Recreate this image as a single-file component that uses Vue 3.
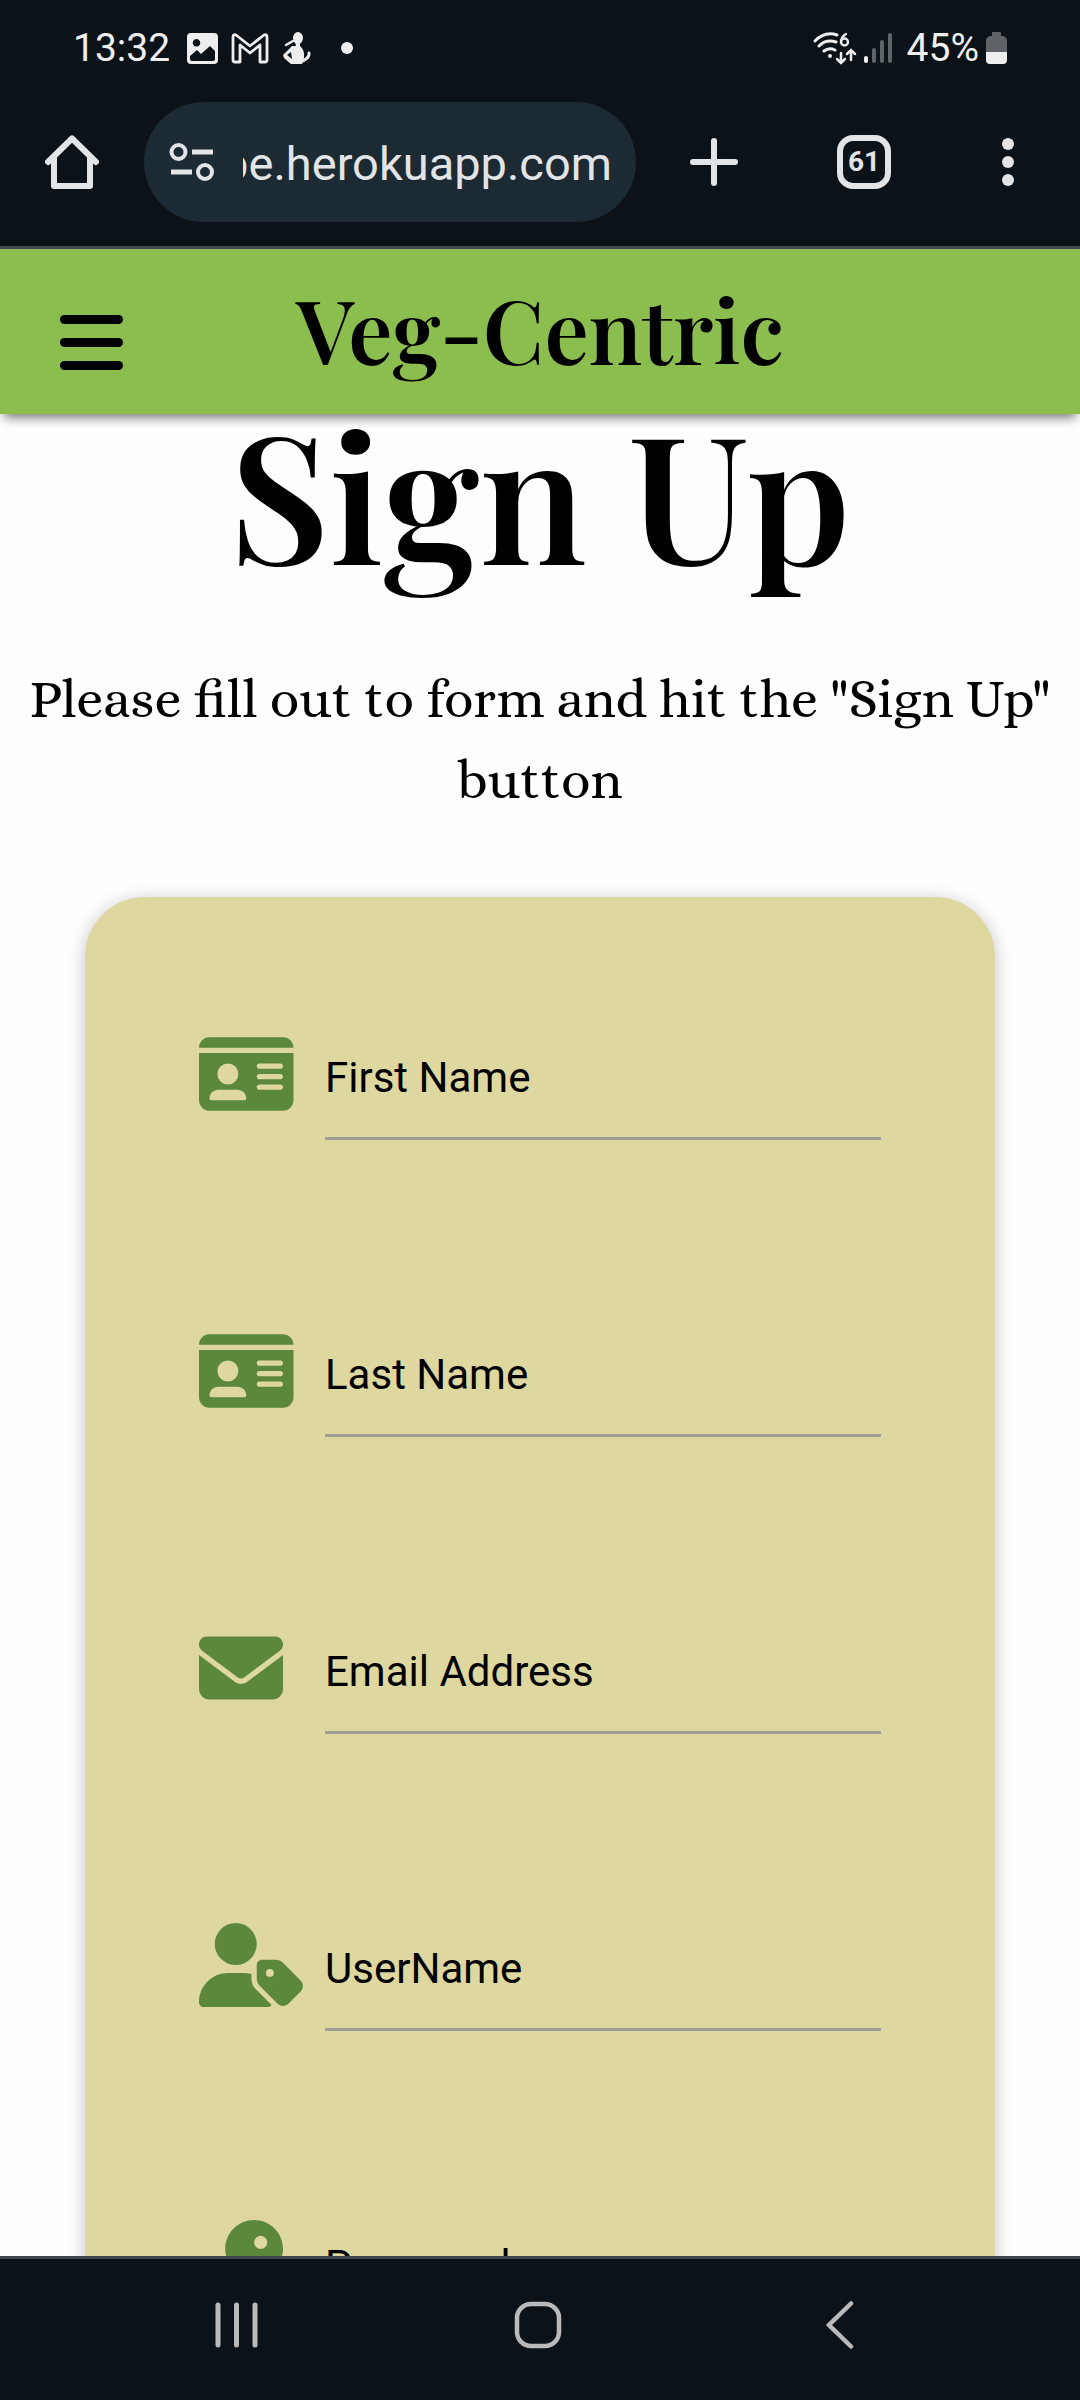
<script setup>
import { reactive } from 'vue'

const icons = {
  card: {
    width: 576,
    path: 'M0 96l576 0c0-35.3-28.7-64-64-64H64C28.7 32 0 60.7 0 96zm0 32V416c0 35.3 28.7 64 64 64H512c35.3 0 64-28.7 64-64V128H0zM64 405.3c0-29.5 23.9-53.3 53.3-53.3H234.7c29.5 0 53.3 23.9 53.3 53.3c0 5.9-4.8 10.7-10.7 10.7H74.7c-5.9 0-10.7-4.8-10.7-10.7zM176 192a64 64 0 1 1 0 128 64 64 0 1 1 0-128zm176 16c0-8.8 7.2-16 16-16H496c8.8 0 16 7.2 16 16s-7.2 16-16 16H368c-8.8 0-16-7.2-16-16zm0 64c0-8.8 7.2-16 16-16H496c8.8 0 16 7.2 16 16s-7.2 16-16 16H368c-8.8 0-16-7.2-16-16zm0 64c0-8.8 7.2-16 16-16H496c8.8 0 16 7.2 16 16s-7.2 16-16 16H368c-8.8 0-16-7.2-16-16z',
  },
  envelope: {
    width: 512,
    path: 'M48 64C21.5 64 0 85.5 0 112c0 15.1 7.1 29.3 19.2 38.4L236.8 313.6c11.4 8.5 27 8.5 38.4 0L492.8 150.4c12.1-9.1 19.2-23.3 19.2-38.4c0-26.5-21.5-48-48-48H48zM0 176V384c0 35.3 28.7 64 64 64H448c35.3 0 64-28.7 64-64V176L294.4 339.2c-22.8 17.1-54 17.1-76.8 0L0 176z',
  },
  userTag: {
    width: 640,
    path: 'M224 256A128 128 0 1 0 224 0a128 128 0 1 0 0 256zm-45.7 48C79.8 304 0 383.8 0 482.3C0 498.7 13.3 512 29.7 512H418.3c10 0 18.8-4.9 24.2-12.5l-99.2-99.2c-14.9-14.9-23.3-35.1-23.3-56.1v-33c-15.9-4.7-32.8-7.2-50.3-7.2H178.3zM384 224c-17.7 0-32 14.3-32 32v82.7c0 17 6.7 33.3 18.7 45.3L478.1 491.3c18.7 18.7 49.1 18.7 67.9 0l73.4-73.4c18.7-18.7 18.7-49.1 0-67.9L512 242.7c-12-12-28.3-18.7-45.3-18.7H384zm24 80a24 24 0 1 1 48 0 24 24 0 1 1 -48 0z',
  },
  key: {
    width: 512,
    path: 'M336 352c97.2 0 176-78.8 176-176S433.2 0 336 0S160 78.8 160 176c0 18.7 2.9 36.8 8.3 53.7L7 391c-4.5 4.5-7 10.6-7 17v80c0 13.3 10.7 24 24 24h80c13.3 0 24-10.7 24-24V448h40c13.3 0 24-10.7 24-24V384h40c6.4 0 12.5-2.5 17-7l33.3-33.3c16.9 5.4 35 8.3 53.7 8.3zM376 96a40 40 0 1 1 0 80 40 40 0 1 1 0-80z',
  },
}

const fields = [
  { id: 'first-name', label: 'First Name', type: 'text', icon: icons.card },
  { id: 'last-name', label: 'Last Name', type: 'text', icon: icons.card },
  { id: 'email', label: 'Email Address', type: 'email', icon: icons.envelope },
  { id: 'username', label: 'UserName', type: 'text', icon: icons.userTag },
  { id: 'password', label: 'Password', type: 'password', icon: icons.key },
]

const values = reactive({ 'first-name': '', 'last-name': '', email: '', username: '', password: '' })
</script>

<template>
  <div class="screen">
    <div class="browser">
      <div class="status">
        <div class="status-left">
          <span class="clock">13:32</span>
          <svg width="31" height="31" viewBox="0 0 31 31">
            <path fill="#eee" fill-rule="evenodd" d="M4 0H27Q31 0 31 4V27Q31 31 27 31H4Q0 31 0 27V4Q0 0 4 0ZM9.500 6a3.800 3.800 0 1 0 .01 0ZM3 23V26Q3 28 5 28H26Q28 28 28 26V18L23 13L14 21L10 17Z" />
          </svg>
          <svg width="38" height="31" viewBox="0 0 38 31" fill="none" stroke="#eee" stroke-width="2.800" stroke-linejoin="round">
            <path d="M2 27V4Q2 1 5 2L19 13L33 2Q36 1 36 4V27Q36 29 34 29H29V12L19 20L9 12V29H4Q2 29 2 27Z" />
          </svg>
          <svg width="30" height="33" viewBox="0 0 30 33">
            <g fill="#eee">
              <ellipse cx="16" cy="6" rx="5" ry="6" />
              <path d="M13 10H18V14Q23 18 22 26L20 32H9L2 26L1 23L10 14H14Z" />
            </g>
            <path d="M4 13L11 9" stroke="#eee" stroke-width="2.500" stroke-linecap="round" />
            <path d="M5 23L9 20L10 27Z" fill="#0c1318" />
            <path d="M27 21Q28 25 21 29" fill="none" stroke="#eee" stroke-width="3" stroke-linecap="round" />
          </svg>
          <span class="more-dot"></span>
        </div>
        <div class="status-right">
          <svg width="44" height="33" viewBox="0 0 44 33" fill="none" stroke="#eee" stroke-width="3" stroke-linecap="round">
            <path d="M2 9Q12-1 24 3M6 14Q13 7 23 10M11 19Q16 15 22 18" />
            <circle cx="17" cy="24" r="2" fill="#eee" stroke="none" />
            <path d="M33 2Q28 5 28 10" stroke-width="2.400" />
            <circle cx="31.500" cy="10" r="3.500" stroke-width="2.400" />
            <path d="M28 21V31M24 27L28 31L32 27M38 28V18M34 22L38 18L42 22" stroke-width="2.500" />
          </svg>
          <svg width="28" height="31" viewBox="0 0 28 31" stroke-width="4" stroke-linecap="round">
            <path d="M2 25V28" stroke="#eee" />
            <path d="M10 17V28M18 9V28M26 2V28" stroke="#5f6467" />
          </svg>
          <span class="percent">45%</span>
          <svg width="21" height="32" viewBox="0 0 21 32">
            <path d="M6 1Q6 0 7 0H14Q15 0 15 1V4H17Q21 5 21 9V20H0V9Q0 5 4 4H6Z" fill="#5f6367" />
            <path d="M0 20H21V28Q21 32 17 32H4Q0 32 0 28Z" fill="#eee" />
          </svg>
        </div>
      </div>

      <div class="toolbar">
        <button type="button" class="tool home" aria-label="Home">
          <svg width="54" height="54" viewBox="0 0 54 54" fill="none" stroke="#e2e4e6" stroke-width="6" stroke-linecap="round" stroke-linejoin="round">
            <path d="M3 27L27 3.500L51 27M9 22V51H45V22" />
          </svg>
        </button>
        <button type="button" class="address">
          <svg width="46" height="40" viewBox="0 0 46 40" fill="none" stroke="#e2e4e6" stroke-width="4">
            <circle cx="9.500" cy="10" r="7" />
            <circle cx="36" cy="30" r="7" />
            <path d="M23 10H44M2 30H23" stroke-width="5" />
          </svg>
          <span class="url">pe.herokuapp.com</span>
        </button>
        <button type="button" class="tool new-tab" aria-label="New tab">
          <svg width="48" height="48" viewBox="0 0 48 48" stroke="#e2e4e6" stroke-width="6" stroke-linecap="round">
            <path d="M3 24H45M24 3V45" />
          </svg>
        </button>
        <button type="button" class="tool"><span class="tabs">61</span></button>
        <button type="button" class="tool" aria-label="Menu">
          <svg width="12" height="48" viewBox="0 0 12 48" fill="#e2e4e6">
            <circle cx="6" cy="6" r="6" />
            <circle cx="6" cy="24" r="6" />
            <circle cx="6" cy="42" r="6" />
          </svg>
        </button>
      </div>
    </div>

    <div class="page">
      <header class="site-header">
        <button type="button" class="menu" aria-label="Open menu">
          <span></span>
          <span></span>
          <span></span>
        </button>
        <a href="#" class="brand">Veg-Centric</a>
      </header>

      <main>
        <h1>Sign Up</h1>
        <p class="intro">Please fill out to form and hit the "Sign Up" button</p>
        <form class="card" @submit.prevent>
          <div v-for="field in fields" :key="field.id" class="row">
            <svg class="icon" :viewBox="`0 0 ${field.icon.width} 512`">
              <path :d="field.icon.path" />
            </svg>
            <div class="field">
              <input :id="field.id" v-model="values[field.id]" :type="field.type" />
              <label v-show="!values[field.id]" :for="field.id">{{ field.label }}</label>
            </div>
          </div>
        </form>
      </main>
    </div>

    <nav class="system-nav">
      <button type="button" aria-label="Recent apps">
        <svg width="43" height="48" viewBox="0 0 43 48" stroke="#b9babc" stroke-width="5" stroke-linecap="round">
          <path d="M3 4V44M21.500 4V44M40 4V44" />
        </svg>
      </button>
      <button type="button" aria-label="Home screen">
        <svg width="48" height="48" viewBox="0 0 48 48" fill="none" stroke="#b9babc" stroke-width="4.500">
          <rect x="3" y="3" width="42" height="42" rx="14" />
        </svg>
      </button>
      <button type="button" aria-label="Back">
        <svg width="28" height="48" viewBox="0 0 28 48" fill="none" stroke="#b9babc" stroke-width="4.500" stroke-linecap="round">
          <path d="M25 2.500L3 24L25 45.500" />
        </svg>
      </button>
    </nav>
  </div>
</template>

<style>
body {
  background: #fefefe;
}
</style>

<style scoped>
.screen {
  display: flex;
  flex-direction: column;
  height: 100vh;
  overflow: hidden;
  font-family: Roboto, sans-serif;
  color: #000;
}

button {
  display: flex;
  align-items: center;
  justify-content: center;
  padding: 0;
  border: 0;
  background: none;
  font: inherit;
  color: inherit;
}

svg {
  display: block;
  flex: none;
}

.browser {
  flex: none;
  padding-bottom: 24px;
  border-bottom: 3px solid #44494a;
  background: #0c1318;
}

.status {
  display: flex;
  justify-content: space-between;
  height: 96px;
  padding: 0 73px;
  font-size: 39px;
  color: #eee;
}

.status-left,
.status-right {
  display: flex;
  align-items: center;
}

.status-left {
  gap: 13px;
}

.status-right {
  gap: 7px;
}

.clock {
  margin-right: 4px;
}

.percent {
  margin-left: 8px;
}

.more-dot {
  width: 12px;
  height: 12px;
  margin-left: 16px;
  border-radius: 50%;
  background: #eee;
}

.toolbar {
  display: flex;
  height: 120px;
  margin-top: 6px;
}

.tool {
  flex: none;
  width: 144px;
}

.new-tab {
  width: 156px;
}

.address {
  flex: 1;
  min-width: 0;
  gap: 28px;
  padding: 0 24px 0 25px;
  border-radius: 60px;
  background: #1b2a33;
  color: #e2e4e6;
}

.url {
  display: flex;
  flex: 1;
  justify-content: flex-end;
  min-width: 0;
  padding-top: 3px;
  overflow: hidden;
  font-size: 47px;
  line-height: 64px;
}

.tabs {
  box-sizing: border-box;
  width: 54px;
  height: 54px;
  border: 6px solid #e2e4e6;
  border-radius: 16px;
  font-size: 28px;
  font-weight: 700;
  line-height: 42px;
  color: #e2e4e6;
}

.page {
  flex: 1;
  min-height: 0;
  overflow: hidden;
  background: #fefefe;
}

.site-header {
  position: relative;
  z-index: 1;
  display: grid;
  grid-template-columns: 1fr auto 1fr;
  align-items: center;
  box-sizing: border-box;
  height: 165px;
  padding: 0 60px 6px;
  background: #8bbd4f;
  box-shadow: 0 8px 10px -4px rgba(0, 0, 0, 0.5);
}

.menu {
  flex-direction: column;
  gap: 14px;
  width: 63px;
  padding-top: 28px;
}

.menu span {
  width: 63px;
  height: 9px;
  border-radius: 5px;
  background: #000;
}

.brand,
h1 {
  font-family: 'Playfair Display', 'Liberation Serif', serif;
  font-weight: 600;
}

.brand {
  font-size: 88px;
  line-height: 120px;
  color: #000;
  text-decoration: none;
}

h1 {
  margin: 0;
  font-size: 176px;
  line-height: 156px;
  text-align: center;
}

.intro {
  margin: 89px 24px 76px;
  font-family: Alice, 'Liberation Serif', serif;
  font-size: 54px;
  line-height: 81px;
  text-align: center;
}

.card {
  display: flex;
  flex-direction: column;
  gap: 164px;
  margin: 0 85px;
  padding: 110px 114px;
  border-radius: 60px;
  background: #ded79f;
  box-shadow: 0 3px 18px rgba(0, 0, 0, 0.24);
}

.row {
  display: grid;
  grid-template-columns: 126px 1fr;
  align-items: center;
}

.icon {
  height: 84px;
  fill: #5c883c;
}

.field {
  display: grid;
}

.field input,
.field label {
  grid-area: 1 / 1;
  font-size: 42px;
}

.field input {
  box-sizing: border-box;
  width: 100%;
  height: 133px;
  padding: 8px 0 0;
  border: 0;
  border-bottom: 3px solid #9e9e96;
  border-radius: 0;
  outline: 0;
  background: none;
  font-family: inherit;
}

.field label {
  align-self: center;
  padding-top: 8px;
  line-height: 50px;
  pointer-events: none;
}

.system-nav {
  display: grid;
  flex: none;
  grid-template-columns: repeat(3, 1fr);
  box-sizing: border-box;
  height: 144px;
  padding: 0 89px 10px 85px;
  border-top: 3px solid #3e464b;
  background: #0c1318;
}
</style>
